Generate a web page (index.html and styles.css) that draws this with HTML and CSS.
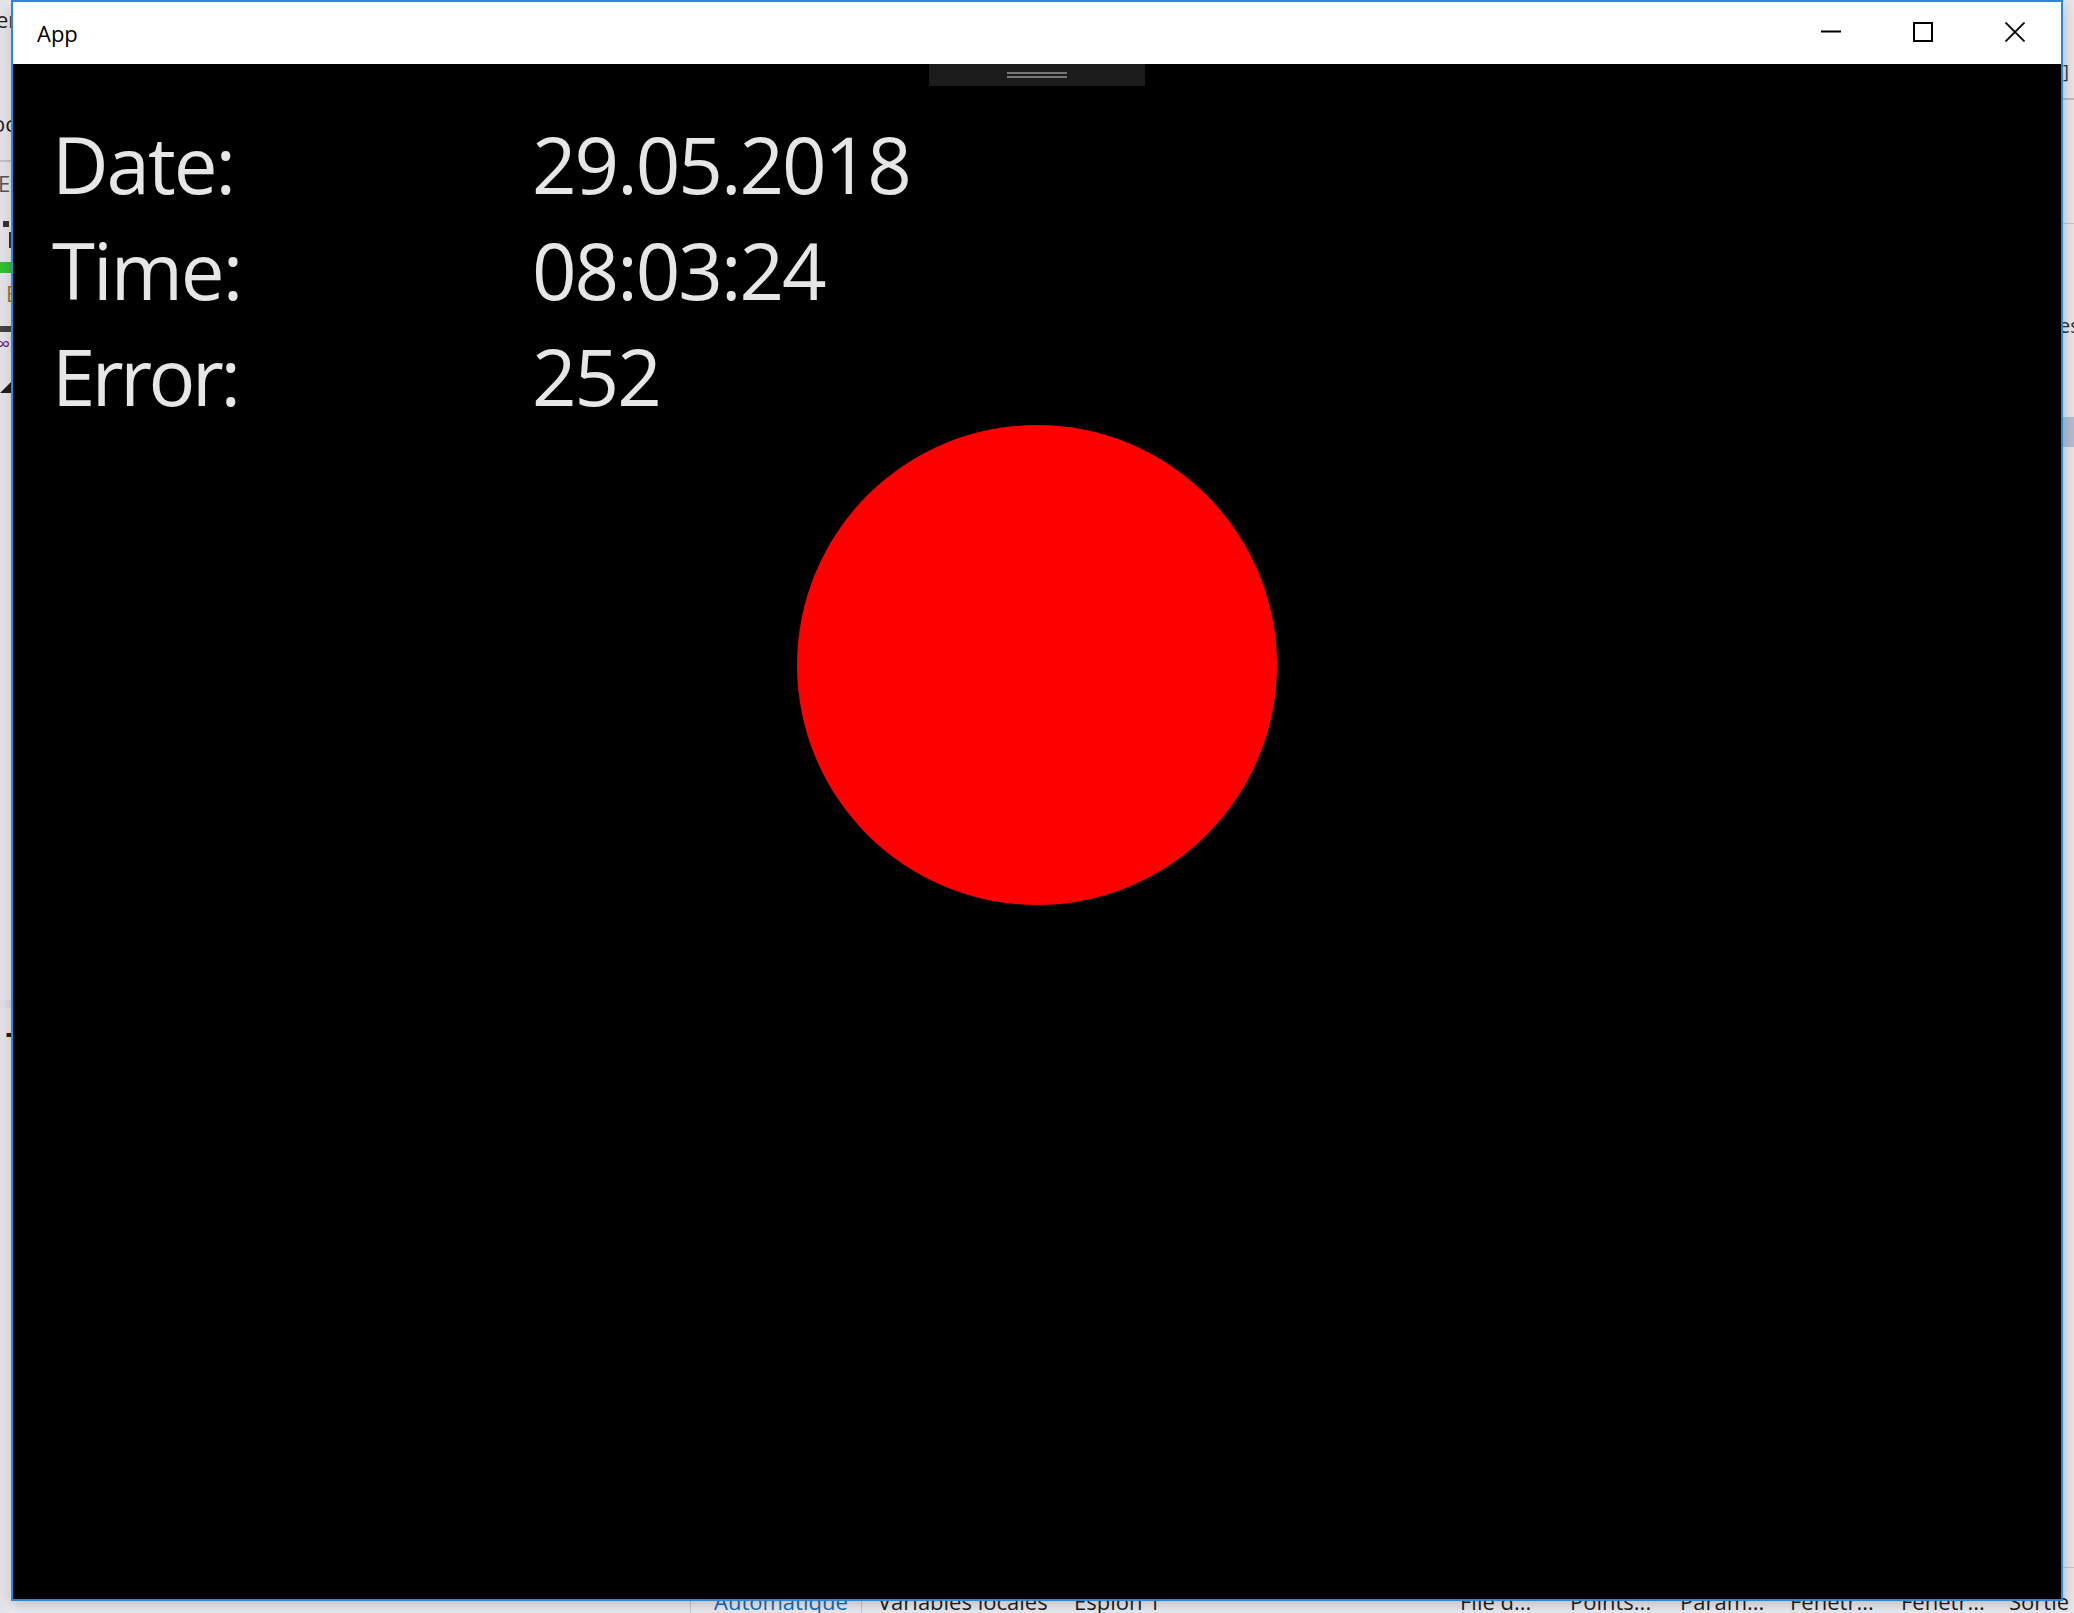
FILE: index.html
```html
<!DOCTYPE html>
<html lang="fr">
<head>
<meta charset="utf-8">
<title>App</title>
<link rel="stylesheet" href="styles.css">
</head>
<body>
<div class="desktop">
  <div class="vs-left">
    <span class="frag frag-er">er</span>
    <span class="frag frag-oc">oc</span>
    <span class="vs-line vs-line-a"></span>
    <span class="frag frag-ex">Ex</span>
    <span class="dot dot-a"></span>
    <span class="dot dot-b"></span>
    <span class="green"></span>
    <span class="frag frag-e">E</span>
    <span class="darkbar"></span>
    <span class="frag frag-vs">∞</span>
    <span class="tri"></span>
    <span class="band"></span>
    <span class="mark"></span>
  </div>
  <div class="vs-right">
    <span class="frag frag-br">]</span>
    <span class="vs-line vs-line-b"></span>
    <span class="vs-line vs-line-c"></span>
    <span class="frag frag-es">es</span>
    <span class="blueband"></span>
    <span class="vs-line vs-line-d"></span>
  </div>
  <div class="vs-tabs">
    <span class="sep"></span>
    <span class="tab tab-active w-auto">Automatique</span>
    <span class="sep sep-mid"></span>
    <span class="tab w-var">Variables locales</span>
    <span class="tab w-esp">Espion 1</span>
    <span class="tab w-110">File d...</span>
    <span class="tab w-110">Points...</span>
    <span class="tab w-110">Param...</span>
    <span class="tab w-111">Fenêtr...</span>
    <span class="tab w-108">Fenêtr...</span>
    <span class="tab">Sortie</span>
  </div>

  <div class="window">
    <div class="titlebar">
      <span class="title">App</span>
      <div class="controls">
        <div class="btn">
          <svg width="20" height="20" viewBox="0 0 20 20"><line x1="0" y1="9.5" x2="20" y2="9.5" stroke="#000" stroke-width="2"/></svg>
        </div>
        <div class="btn">
          <svg width="20" height="20" viewBox="0 0 20 20"><rect x="1" y="1" width="18" height="18" fill="none" stroke="#000" stroke-width="2"/></svg>
        </div>
        <div class="btn">
          <svg width="20" height="20" viewBox="0 0 20 20"><path d="M0.5 0.5 L19.5 19.5 M19.5 0.5 L0.5 19.5" stroke="#000" stroke-width="1.8" fill="none"/></svg>
        </div>
      </div>
    </div>
    <div class="content">
      <div class="handle"><span></span><span></span></div>
      <div class="info">
        <span class="label">Date:</span><span class="value">29.05.2018</span>
        <span class="label">Time:</span><span class="value">08:03:24</span>
        <span class="label label-tight">Error:</span><span class="value">252</span>
      </div>
      <div class="lamp"></div>
    </div>
  </div>
</div>
</body>
</html>
```

FILE: styles.css
```css
html, body {
  margin: 0;
  padding: 0;
}

body {
  width: 2074px;
  height: 1613px;
  overflow: hidden;
  background: #eeeef2;
  font-family: "Open Sans", "Noto Sans", sans-serif;
}

.desktop {
  position: relative;
  width: 2074px;
  height: 1613px;
  background: linear-gradient(to right, #e4e4e8 0, #eeeef2 12px, #eeeef2 2062px, #e2e4ea 2074px);
}

/* ---------- background IDE fragments ---------- */
.vs-left {
  position: absolute;
  left: 0;
  top: 0;
  width: 11px;
  height: 1613px;
  overflow: hidden;
}

.vs-right {
  position: absolute;
  left: 2063px;
  top: 0;
  width: 11px;
  height: 1613px;
  overflow: hidden;
  background: #e6e7ec;
}

.frag {
  position: absolute;
  font-size: 22px;
  line-height: 1;
  color: #1e1e1e;
  white-space: nowrap;
}

.frag-er { left: -4px; top: 8px; }
.frag-oc { left: -8px; top: 112px; }
.frag-ex { left: -2px; top: 172px; color: #555; }
.frag-e { left: 6px; top: 282px; color: #b0701c; }
.frag-vs { left: -4px; top: 334px; color: #68217a; font-size: 20px; }
.frag-br { left: 0; top: 62px; font-size: 18px; color: #333; }
.frag-es { left: -4px; top: 316px; font-size: 20px; color: #333; }

.vs-line {
  position: absolute;
  left: 0;
  width: 11px;
  height: 1px;
  background: #c4c6cf;
}
.vs-line-a { top: 160px; height: 2px; }
.vs-line-b { top: 98px; height: 2px; background: #b8bcc8; }
.vs-line-c { top: 223px; }
.vs-line-d { top: 1567px; }

.dot {
  position: absolute;
  background: #333;
}
.dot-a { left: 3px; top: 221px; width: 6px; height: 6px; }
.dot-b { left: 9px; top: 232px; width: 3px; height: 16px; }

.green {
  position: absolute;
  left: 0;
  top: 262px;
  width: 11px;
  height: 11px;
  background: #32c332;
}

.darkbar {
  position: absolute;
  left: 0;
  top: 326px;
  width: 11px;
  height: 6px;
  background: #444;
}

.tri {
  position: absolute;
  left: 0;
  top: 382px;
  width: 0;
  height: 0;
  border-left: 11px solid transparent;
  border-bottom: 11px solid #1e1e1e;
}

.band {
  position: absolute;
  left: 0;
  top: 1000px;
  width: 11px;
  height: 8px;
  background: #e0e0e6;
}

.mark {
  position: absolute;
  left: 6px;
  top: 1033px;
  width: 5px;
  height: 4px;
  background: #1e1e1e;
  border-left: 1px solid #c88a2a;
}

.blueband {
  position: absolute;
  left: 0;
  top: 417px;
  width: 11px;
  height: 30px;
  background: #b4bdd0;
}

.vs-tabs {
  position: absolute;
  left: 0;
  top: 1589px;
  width: 2074px;
  height: 24px;
  display: flex;
  align-items: flex-start;
  font-size: 22px;
  line-height: 24px;
  color: #1e1e1e;
  white-space: nowrap;
  padding-left: 690px;
  box-sizing: border-box;
}

.vs-tabs .sep {
  flex: none;
  width: 1px;
  height: 24px;
  background: #c9c9d2;
  margin-right: 23px;
}

.vs-tabs .sep-mid {
  margin-right: 16px;
}

.vs-tabs .tab {
  flex: none;
}

.vs-tabs .tab-active {
  color: #0e70c0;
  width: 147px;
}

.vs-tabs .w-var { width: 196px; }
.vs-tabs .w-esp { width: 386px; }
.vs-tabs .w-110 { width: 110px; }
.vs-tabs .w-111 { width: 111px; }
.vs-tabs .w-108 { width: 108px; }

/* ---------- the application window ---------- */
.window {
  position: absolute;
  left: 11px;
  top: 0;
  width: 2052px;
  height: 1601px;
  box-sizing: border-box;
  border: 2px solid #2b88d8;
  display: flex;
  flex-direction: column;
  box-shadow: 0 4px 14px rgba(0, 0, 0, 0.22);
  background: #000;
}

.titlebar {
  height: 62px;
  flex: none;
  background: #fff;
  display: flex;
  align-items: center;
}

.title {
  margin-left: 24px;
  font-size: 22px;
  color: #000;
  line-height: 1;
  margin-top: -1px;
}

.controls {
  margin-left: auto;
  display: flex;
  height: 100%;
}

.btn {
  width: 92px;
  height: 100%;
  display: flex;
  align-items: center;
  justify-content: center;
}

.btn svg {
  display: block;
  margin-top: -2px;
}

.content {
  position: relative;
  flex: 1;
  background: #000;
}

.handle {
  position: absolute;
  top: 0;
  left: 50%;
  transform: translateX(-50%);
  width: 216px;
  height: 22px;
  background: #1b1b1b;
  display: flex;
  flex-direction: column;
  align-items: center;
  gap: 2px;
  padding-top: 8px;
  box-sizing: border-box;
}

.handle span {
  width: 60px;
  height: 2px;
  background: #767676;
}

.info {
  display: grid;
  grid-template-columns: 480px auto;
  padding: 47px 0 0 39px;
  font-size: 78px;
  line-height: 106px;
  letter-spacing: -2px;
  color: #e6e6e6;
  font-weight: 400;
}

.label-tight {
  letter-spacing: -3.5px;
}

.lamp {
  width: 480px;
  height: 480px;
  margin: -4px auto 0;
  border-radius: 50%;
  background: #ff0000;
}
```
